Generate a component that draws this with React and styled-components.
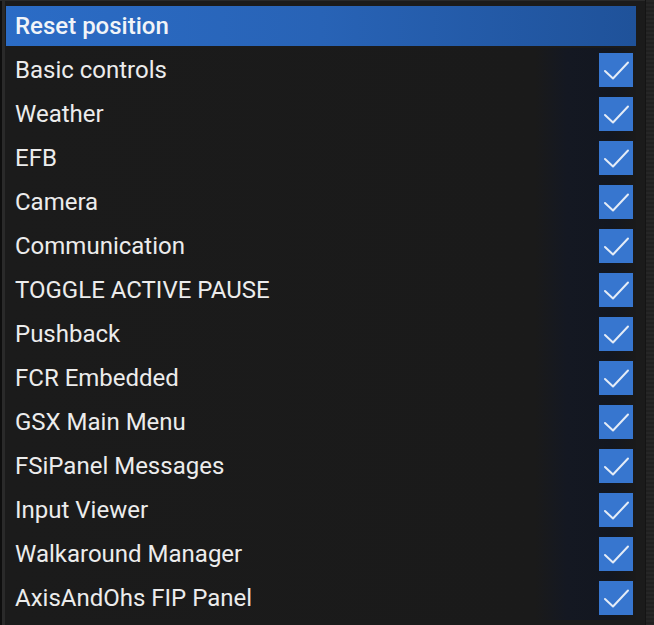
import React from "react";
import styled, { createGlobalStyle } from "styled-components";

const Global = createGlobalStyle`
  html, body { margin: 0; padding: 0; background: #151515; }
  body { font-family: Roboto, "Noto Sans", "Liberation Sans", sans-serif; }
`;

const Window = styled.div`
  width: 654px;
  height: 625px;
  display: flex;
  background: #1b1b1b;
  overflow: hidden;
`;

const Main = styled.div`
  width: 646px;
  box-sizing: border-box;
  display: flex;
  flex-direction: column;
  padding: 5px 9px 0 6px;
  background: #1b1b1b;
  border-top: 1px solid #2a2a2a;
  box-shadow: inset 2px 0 0 #0e0e0e, inset 5px 0 0 #2a2a2a;
`;

const Rail = styled.div`
  width: 8px;
  background: repeating-linear-gradient(180deg, #262626 0 2px, #202020 2px 4px);
  border-left: 1px solid #141414;
`;

const Header = styled.div`
  height: 40px;
  display: flex;
  align-items: center;
  padding-left: 9px;
  margin-bottom: 2px;
  background: linear-gradient(90deg, #2b6cc6 0%, #2863b6 50%, #1f529a 100%);
  color: #f1f4f8;
  font-size: 24px;
  font-weight: 500;
`;

const Row = styled.div`
  height: 44px;
  display: flex;
  align-items: center;
  justify-content: space-between;
  padding-left: 9px;
  padding-right: 3px;
  background: linear-gradient(90deg, #1b1b1b 0%, #1a1a1a 84%, #141822 89%, #131720 96%, #1a1a1a 100%);
`;

const Label = styled.span`
  color: #ececec;
  font-size: 24px;
  font-weight: 400;
`;

const Box = styled.div`
  width: 34px;
  height: 34px;
  background: ${(p) => (p.$checked ? "#3776cf" : "#2a2a2a")};
  display: flex;
  align-items: center;
  justify-content: center;
`;

const Check = () => (
  <svg width="34" height="34" viewBox="0 0 34 34">
    <path d="M6 18 L14 25.5 L29 9.5" fill="none" stroke="#e4ecf7" strokeWidth="2" strokeLinecap="round" strokeLinejoin="round" />
  </svg>
);

const items = [
  "Basic controls",
  "Weather",
  "EFB",
  "Camera",
  "Communication",
  "TOGGLE ACTIVE PAUSE",
  "Pushback",
  "FCR Embedded",
  "GSX Main Menu",
  "FSiPanel Messages",
  "Input Viewer",
  "Walkaround Manager",
  "AxisAndOhs FIP Panel",
];

export default function App() {
  return (
    <>
      <Global />
      <Window>
        <Main>
          <Header>Reset position</Header>
          {items.map((t) => (
            <Row key={t}>
              <Label>{t}</Label>
              <Box $checked>
                <Check />
              </Box>
            </Row>
          ))}
        </Main>
        <Rail />
      </Window>
    </>
  );
}
